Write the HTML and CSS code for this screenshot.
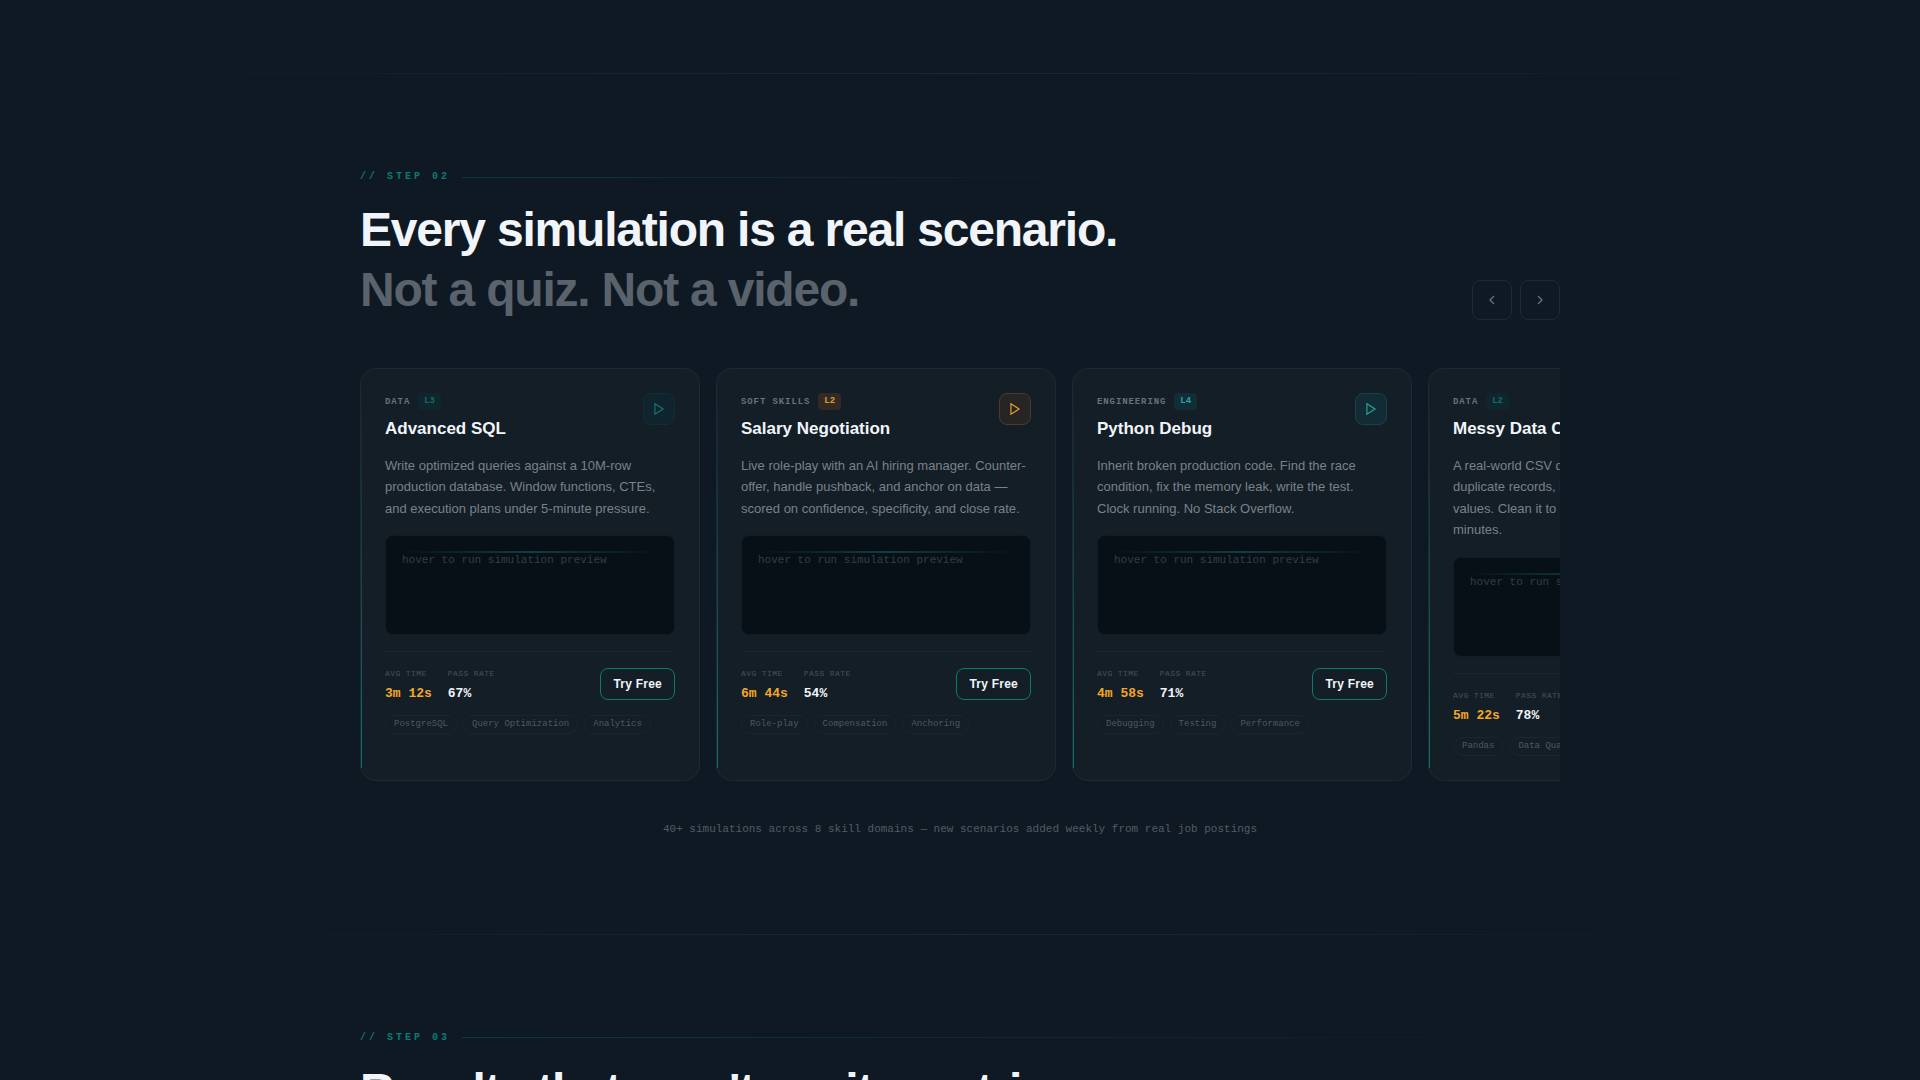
FILE: index.html
```html
<!DOCTYPE html>
<html lang="en">
<head>
<meta charset="UTF-8">
<meta name="viewport" content="width=device-width, initial-scale=1.0">
<title>Simulations</title>
<link rel="stylesheet" href="styles.css">
</head>
<body>

<hr class="divider divider-wide">

<section class="section">
  <div class="section-head">
    <div>
      <div class="step">// STEP 02</div>
      <h2>Every simulation is a real scenario.<br><span class="muted">Not a quiz. Not a video.</span></h2>
    </div>
    <div class="nav">
      <button class="nav-btn" aria-label="Previous">
        <svg width="16" height="16" viewBox="0 0 24 24"><path d="M15 18l-6-6 6-6"/></svg>
      </button>
      <button class="nav-btn" aria-label="Next">
        <svg width="16" height="16" viewBox="0 0 24 24"><path d="M9 18l6-6-6-6"/></svg>
      </button>
    </div>
  </div>

  <div class="track">
    <article class="card">
      <div class="card-head">
        <div>
          <div class="meta"><span class="domain">DATA</span><span class="level level-dim">L3</span></div>
          <h3>Advanced SQL</h3>
        </div>
        <button class="play play-dim" aria-label="Play Advanced SQL">
          <svg width="14" height="14" viewBox="0 0 24 24"><path d="M5 3l14 9-14 9z"/></svg>
        </button>
      </div>
      <p class="desc">Write optimized queries against a 10M-row production database. Window functions, CTEs, and execution plans under 5-minute pressure.</p>
      <div class="preview">hover to run simulation preview</div>
      <div class="card-foot">
        <div class="stats">
          <div><div class="label">AVG TIME</div><div class="value time">3m 12s</div></div>
          <div><div class="label">PASS RATE</div><div class="value">67%</div></div>
        </div>
        <button class="try">Try Free</button>
      </div>
      <div class="tags"><span>PostgreSQL</span><span>Query Optimization</span><span>Analytics</span></div>
    </article>

    <article class="card">
      <div class="card-head">
        <div>
          <div class="meta"><span class="domain">SOFT SKILLS</span><span class="level level-amber">L2</span></div>
          <h3>Salary Negotiation</h3>
        </div>
        <button class="play play-amber" aria-label="Play Salary Negotiation">
          <svg width="14" height="14" viewBox="0 0 24 24"><path d="M5 3l14 9-14 9z"/></svg>
        </button>
      </div>
      <p class="desc">Live role-play with an AI hiring manager. Counter-offer, handle pushback, and anchor on data — scored on confidence, specificity, and close rate.</p>
      <div class="preview">hover to run simulation preview</div>
      <div class="card-foot">
        <div class="stats">
          <div><div class="label">AVG TIME</div><div class="value time">6m 44s</div></div>
          <div><div class="label">PASS RATE</div><div class="value">54%</div></div>
        </div>
        <button class="try">Try Free</button>
      </div>
      <div class="tags"><span>Role-play</span><span>Compensation</span><span>Anchoring</span></div>
    </article>

    <article class="card">
      <div class="card-head">
        <div>
          <div class="meta"><span class="domain">ENGINEERING</span><span class="level level-teal">L4</span></div>
          <h3>Python Debug</h3>
        </div>
        <button class="play play-teal" aria-label="Play Python Debug">
          <svg width="14" height="14" viewBox="0 0 24 24"><path d="M5 3l14 9-14 9z"/></svg>
        </button>
      </div>
      <p class="desc">Inherit broken production code. Find the race condition, fix the memory leak, write the test. Clock running. No Stack Overflow.</p>
      <div class="preview">hover to run simulation preview</div>
      <div class="card-foot">
        <div class="stats">
          <div><div class="label">AVG TIME</div><div class="value time">4m 58s</div></div>
          <div><div class="label">PASS RATE</div><div class="value">71%</div></div>
        </div>
        <button class="try">Try Free</button>
      </div>
      <div class="tags"><span>Debugging</span><span>Testing</span><span>Performance</span></div>
    </article>

    <article class="card">
      <div class="card-head">
        <div>
          <div class="meta"><span class="domain">DATA</span><span class="level level-dim">L2</span></div>
          <h3>Messy Data Cleanup</h3>
        </div>
        <button class="play play-dim" aria-label="Play Messy Data Cleanup">
          <svg width="14" height="14" viewBox="0 0 24 24"><path d="M5 3l14 9-14 9z"/></svg>
        </button>
      </div>
      <p class="desc">A real-world CSV dump with inconsistent dates, duplicate records, broken types, and missing values. Clean it to a passing schema in eight minutes.</p>
      <div class="preview">hover to run simulation preview</div>
      <div class="card-foot">
        <div class="stats">
          <div><div class="label">AVG TIME</div><div class="value time">5m 22s</div></div>
          <div><div class="label">PASS RATE</div><div class="value">78%</div></div>
        </div>
        <button class="try">Try Free</button>
      </div>
      <div class="tags"><span>Pandas</span><span>Data Quality</span><span>ETL</span></div>
    </article>
  </div>

  <p class="note">40+ simulations across 8 skill domains — new scenarios added weekly from real job postings</p>
</section>

<hr class="divider">

<section class="section">
  <div class="step">// STEP 03</div>
  <h2>Results that aren't vanity metrics.</h2>
</section>

</body>
</html>
```
FILE: styles.css
```css
* {
  box-sizing: border-box;
}

body {
  margin: 0;
  padding-top: 73px;
  height: 100vh;
  overflow: hidden;
  background: #0f1923;
  color: #f1f5f9;
  font-family: "Liberation Sans", Arial, sans-serif;
}

h2, h3, p {
  margin: 0;
}

button {
  padding: 0;
  cursor: pointer;
}

svg {
  display: block;
  fill: none;
  stroke: currentColor;
  stroke-width: 2;
}

.divider {
  width: 80%;
  height: 1px;
  margin: 0 auto;
  border: none;
  background: linear-gradient(90deg, transparent, rgba(13,148,136,0.18), transparent);
}

.divider-wide {
  width: 90%;
}

.section {
  max-width: 1200px;
  margin: 0 auto;
  padding: 96px 0;
}

.section-head {
  display: flex;
  justify-content: space-between;
  align-items: flex-end;
  margin-bottom: 48px;
}

.step {
  display: flex;
  align-items: center;
  gap: 12px;
  margin-bottom: 16px;
  font: bold 10px/14px "Liberation Mono", monospace;
  letter-spacing: 3px;
  color: #0d7a72;
}

.step::after {
  content: "";
  flex: 1;
  height: 1px;
  background: linear-gradient(90deg, rgba(13,148,136,0.25), transparent);
}

h2 {
  font-size: 48px;
  line-height: 60px;
  letter-spacing: -0.025em;
}

.muted {
  color: #5a636c;
}

.nav {
  display: flex;
  gap: 8px;
}

.nav-btn {
  display: grid;
  place-items: center;
  width: 40px;
  height: 40px;
  border: 1px solid #1f2932;
  border-radius: 8px;
  background: transparent;
  color: #69727b;
}

.track {
  display: flex;
  gap: 16px;
  overflow: hidden;
}

.card {
  position: relative;
  flex: 0 0 340px;
  padding: 24px;
  border: 1px solid #1e2a33;
  border-radius: 16px;
  background: #141e27;
}

.card::before {
  content: "";
  position: absolute;
  left: 0;
  top: 12px;
  bottom: 12px;
  width: 1px;
  background: linear-gradient(transparent, #0d9488);
  opacity: 0.7;
}

.card-head {
  display: flex;
  justify-content: space-between;
  align-items: flex-start;
  margin-bottom: 14px;
}

.meta {
  display: flex;
  align-items: center;
  gap: 8px;
  margin-bottom: 7px;
  font: bold 9px/17px "Liberation Mono", monospace;
}

.domain {
  letter-spacing: 0.1em;
  line-height: 16px;
  color: #69727b;
}

.level {
  padding: 0 6px;
  border-radius: 4px;
}

.level-dim {
  background: #10262f;
  color: #0e6e69;
}

.level-amber {
  background: #322b25;
  color: #e09b2d;
}

.level-teal {
  background: #122d36;
  color: #1fa89f;
}

h3 {
  font-size: 17px;
  line-height: 24px;
}

.play {
  display: grid;
  place-items: center;
  width: 32px;
  height: 32px;
  border: 1px solid;
  border-radius: 8px;
}

.play-dim {
  background: #10242e;
  border-color: #122d35;
  color: #0e7a74;
}

.play-amber {
  background: #262524;
  border-color: #4a3c25;
  color: #e59e2d;
}

.play-teal {
  background: #122b34;
  border-color: #16424a;
  color: #1fa89f;
}

.desc {
  font-size: 13px;
  line-height: 1.65;
  color: #79818a;
}

.preview {
  position: relative;
  height: 100px;
  margin: 16px 0;
  padding: 16px;
  border: 1px solid #111b24;
  border-radius: 8px;
  background: #081017;
  font: 11px/16px "Liberation Mono", monospace;
  color: #353d44;
}

/* scan line */
.preview::before {
  content: "";
  position: absolute;
  top: 15px;
  left: 16px;
  right: 16px;
  height: 2px;
  background: linear-gradient(90deg, transparent, #123d43, transparent);
}

.card-foot {
  display: flex;
  justify-content: space-between;
  align-items: flex-start;
  padding-top: 16px;
  border-top: 1px solid #1b252e;
}

.stats {
  display: flex;
  gap: 16px;
  font-family: "Liberation Mono", monospace;
}

.label {
  margin-bottom: 7px;
  font-size: 8px;
  line-height: 11px;
  letter-spacing: 0.05em;
  color: #48515a;
}

.value {
  font-size: 13px;
  font-weight: bold;
  line-height: 15px;
}

.time {
  color: #f5a623;
}

.try {
  height: 32px;
  padding: 0 12px;
  border: 1px solid #0d7a72;
  border-radius: 8px;
  background: transparent;
  color: #f1f5f9;
  font: bold 12px "Liberation Sans", Arial, sans-serif;
  letter-spacing: 0.02em;
}

.tags {
  display: flex;
  gap: 6px;
  margin-top: 14px;
}

.tags span {
  flex: none;
  padding: 0 8px;
  border: 1px solid #1b252e;
  border-radius: 10px;
  font: 9px/17px "Liberation Mono", monospace;
  color: #4f5861;
}

.note {
  margin-top: 40px;
  font: 11px/17px "Liberation Mono", monospace;
  text-align: center;
  color: #525b64;
}
```
